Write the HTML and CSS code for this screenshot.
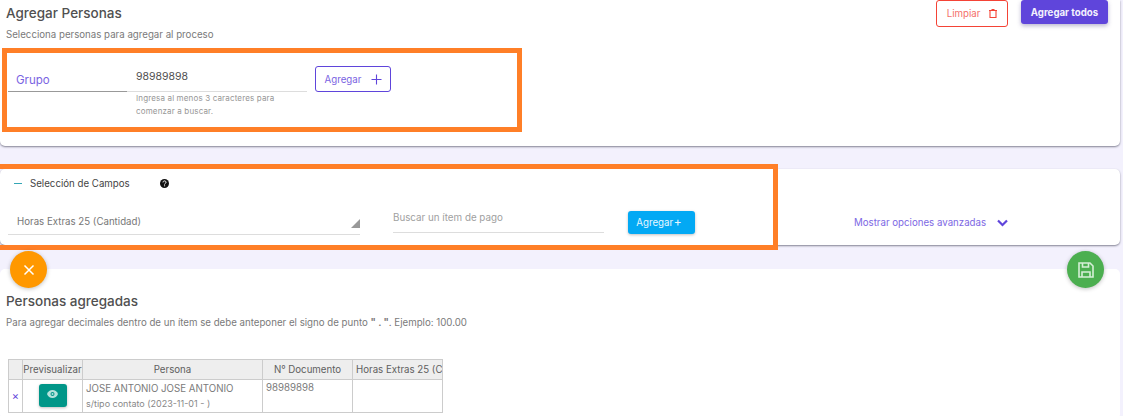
FILE: index.html
```html
<!DOCTYPE html>
<html lang="es">
<head>
<meta charset="utf-8">
<title>Agregar Personas</title>
<link rel="stylesheet" href="styles.css">
</head>
<body>
<div class="page">
  <section class="card card-add">
    <div class="head">
      <div>
        <h2 class="title">Agregar Personas</h2>
        <p class="sub">Selecciona personas para agregar al proceso</p>
      </div>
      <div class="head-actions">
        <button class="btn-clear">Limpiar
          <svg width="8" height="9" viewBox="0 0 8 9" fill="none" stroke="#f44336" stroke-width="1.100"><path d="M0 1.500h8M1 1.500v7h6v-7M2.500 0.500h3"/></svg>
        </button>
        <button class="btn-all">Agregar todos</button>
      </div>
    </div>
    <div class="search-row">
      <div class="group-field">Grupo</div>
      <div class="doc-field">
        <div class="doc-value">98989898</div>
        <div class="hint">Ingresa al menos 3 caracteres para<br>comenzar a buscar.</div>
      </div>
      <button class="btn-add">Agregar
        <svg width="11" height="11" viewBox="0 0 11 11" stroke="#5f45db" stroke-width="1.100"><path d="M5.500 0.500v10M0.500 5.500h10"/></svg>
      </button>
    </div>
  </section>

  <section class="card card-fields">
    <div class="fields-head">
      <span class="dash"></span>
      <span class="fields-title">Selección de Campos</span>
      <svg class="help" width="9" height="9" viewBox="0 0 9 9"><circle cx="4.500" cy="4.500" r="4.500" fill="#111"/><path d="M3 3.400c0-2 3-2 3 0 0 1.100-1.500 1-1.500 2.100" fill="none" stroke="#fff" stroke-width="1"/><rect x="4.100" y="6.300" width="1" height="1" fill="#fff"/></svg>
    </div>
    <div class="fields-row">
      <div class="select">Horas Extras 25 (Cantidad)<span class="select-arrow"></span></div>
      <div class="item-search">Buscar un ítem de pago</div>
      <button class="btn-blue">Agregar <span class="plus">+</span></button>
      <div class="advanced">Mostrar opciones avanzadas
        <svg width="11" height="8" viewBox="0 0 11 8" fill="none" stroke="#5f45db" stroke-width="2.200"><path d="M1 1.500l4.500 4.500 4.500-4.500"/></svg>
      </div>
    </div>
  </section>

  <section class="card card-list">
    <h2 class="title">Personas agregadas</h2>
    <p class="sub note">Para agregar decimales dentro de un ítem se debe anteponer el signo de punto <b>" . "</b>. Ejemplo: 100.00</p>
    <table class="grid">
      <colgroup><col class="c1"><col class="c2"><col class="c3"><col class="c4"><col class="c5"></colgroup>
      <thead>
        <tr><th></th><th class="tight">Previsualizar</th><th>Persona</th><th>N° Documento</th><th class="left">Horas Extras 25 (C</th></tr>
      </thead>
      <tbody>
        <tr>
          <td class="del">×</td>
          <td class="center"><span class="eye"><svg width="11" height="8" viewBox="0 0 22 16"><path d="M11 0C6 0 2 3.200 0 8c2 4.800 6 8 11 8s9-3.200 11-8c-2-4.800-6-8-11-8z" fill="#b6e3dc"/><circle cx="11" cy="8" r="4" fill="#009688"/><circle cx="11" cy="8" r="2" fill="#b6e3dc"/></svg></span></td>
          <td><div class="name">JOSE ANTONIO JOSE ANTONIO</div><div class="meta">s/tipo contato (2023-11-01 - )</div></td>
          <td class="doc">98989898</td>
          <td></td>
        </tr>
      </tbody>
    </table>
  </section>

  <div class="mark mark-a"></div>
  <div class="mark mark-b"></div>
  <button class="fab fab-close"><svg width="12" height="12" viewBox="0 0 12 12" stroke="#fff" stroke-width="1.500"><path d="M1.500 1.500l9 9M10.500 1.500l-9 9"/></svg></button>
  <button class="fab fab-save"><svg width="16" height="16" viewBox="0 0 16 16" fill="none" stroke="#d5efd6" stroke-width="1.600"><path d="M1 1h11l3 3v11H1z"/><path d="M4.500 1v4h6V1M4 15v-5h8v5"/></svg></button>
</div>
</body>
</html>
```
FILE: styles.css
```css
* { box-sizing: border-box; }
html, body { margin: 0; padding: 0; background: #fff; }
body { font-family: Inter, "Liberation Sans", sans-serif; color: #555; overflow: hidden; height: 416px; }
button { font-family: inherit; cursor: pointer; }
.page { position: relative; width: 1123px; height: 416px; background: #f3f1fd; overflow: hidden; }
.card { width: 1120px; background: #fff; border-radius: 5px; }
.card-add { height: 146px; border-radius: 0 0 5px 5px; box-shadow: 0 1px 2px rgba(70,70,90,.65); padding: 0 12px 0 6px; }
.head { display: flex; justify-content: space-between; align-items: flex-start; }
.title { margin: 0; font-size: 13.500px; line-height: 17px; font-weight: 500; color: #505050; }
.card-add .title { padding-top: 5px; }
.sub { margin: 6px 0 0; font-size: 9.700px; line-height: 14px; color: #7a7a7a; }
.head-actions { display: flex; gap: 13px; align-items: flex-start; }
.btn-clear { width: 72px; height: 27px; display: flex; align-items: center; justify-content: center; gap: 9px; background: #fff; border: 1px solid #f44336; border-radius: 3px; color: #f4706a; font-size: 9.700px; padding: 0; }
.btn-all { width: 87px; height: 24px; background: #5f45db; border: 0; border-radius: 3px; color: #f3f1fd; font-size: 9.700px; font-weight: 700; box-shadow: 0 2px 4px rgba(60,50,120,.35); padding: 0; }
.search-row { display: flex; align-items: flex-start; margin: 18px 0 0 2px; }
.group-field { width: 119px; height: 32px; padding: 13px 0 0 8px; border-bottom: 1px solid #999; font-size: 11.500px; line-height: 14px; color: #7a63e2; }
.doc-field { width: 180px; }
.doc-value { height: 32px; padding: 10px 0 0 9px; font-size: 10.500px; line-height: 14px; color: #505050; border-bottom: 1px solid #ddd; }
.hint { padding: 0 0 0 9px; font-size: 8px; line-height: 13px; letter-spacing: .15px; color: #969696; }
.btn-add { width: 76px; height: 26px; margin: 6px 0 0 8px; display: flex; align-items: center; justify-content: center; gap: 10px; background: #fff; border: 1px solid #5f45db; border-radius: 3px; color: #7a63e2; font-size: 9.700px; padding: 0 0 0 1px; }
.card-fields { position: relative; height: 76px; margin-top: 23px; box-shadow: 0 1px 2px rgba(70,70,90,.65); padding: 0 0 0 8px; }
.fields-head { display: flex; align-items: center; height: 28px; padding-left: 6px; }
.dash { width: 8px; height: 1px; background: #34a6b5; }
.fields-title { margin-left: 8px; width: 130px; font-size: 9.700px; color: #444; }
.fields-row { display: flex; align-items: flex-start; }
.select { position: relative; width: 352px; height: 38px; padding: 18px 0 0 9px; border-bottom: 1px solid #ddd; font-size: 9.700px; line-height: 14px; color: #777; }
.select-arrow { position: absolute; right: 0; bottom: 6px; width: 0; height: 0; border-style: solid; border-width: 0 0 9px 9px; border-color: transparent transparent #999 transparent; }
.item-search { width: 211px; height: 36px; margin-left: 33px; padding-top: 14px; border-bottom: 1px solid #ddd; font-size: 9.800px; line-height: 14px; color: #a0a0a0; }
.btn-blue { width: 67px; height: 23px; margin: 14px 0 0 24px; background: #03a9f4; border: 0; border-radius: 3px; color: #e8f7ff; font-size: 9.700px; box-shadow: 0 1px 3px rgba(0,0,0,.25); padding: 0 5px 0 0; }
.plus { font-size: 12px; line-height: 10px; margin-left: -2px; }
.advanced { display: flex; align-items: center; gap: 11px; margin: 19px 0 0 159px; font-size: 9.700px; line-height: 14px; color: #7d68e4; }
.card-list { height: 150px; margin-top: 24px; padding: 24px 0 0 6px; }
.note { margin-top: 6px; }
.note b { font-weight: 700; }
.grid { margin: 29px 0 0 2px; width: 434px; height: 54px; table-layout: fixed; border-collapse: collapse; font-size: 9.700px; color: #7a7a7a; }
.c1 { width: 14px; } .c2 { width: 60px; } .c3 { width: 180px; } .c4 { width: 90px; } .c5 { width: 90px; }
.grid th, .grid td { border: 1px solid #ccc; padding: 0 3px; overflow: hidden; white-space: nowrap; }
.grid th { height: 20px; background: #eee; font-weight: 400; color: #606060; text-align: center; }
.grid th.left { text-align: left; }
.grid th.tight { padding: 0; }
.grid td { vertical-align: top; line-height: 14px; }
.grid .del { color: #5f45db; text-align: center; vertical-align: middle; font-size: 11px; padding: 0; }
.grid .center { text-align: center; padding-top: 4px; }
.eye { display: inline-flex; align-items: center; justify-content: center; width: 28px; height: 23px; padding-bottom: 4px; background: #009688; border-radius: 3px; box-shadow: 0 1px 3px rgba(0,0,0,.25); }
.name { line-height: 15px; margin-top: 1px; }
.meta { font-size: 9px; line-height: 16px; color: #888; }
.grid .doc { padding-top: 1px; }
.mark { position: absolute; border: 5px solid #ff7f27; pointer-events: none; }
.mark-a { left: 2px; top: 48px; width: 520px; height: 84px; }
.mark-b { left: 0; top: 164px; width: 778px; height: 86px; border-left-width: 0; }
.fab { position: absolute; width: 37px; height: 37px; border: 0; border-radius: 50%; display: flex; align-items: center; justify-content: center; padding: 0; box-shadow: 0 1px 4px rgba(0,0,0,.25); }
.fab-close { left: 10px; top: 251px; background: #ff9800; }
.fab-save { left: 1067px; top: 251px; background: #4caf50; }
```
